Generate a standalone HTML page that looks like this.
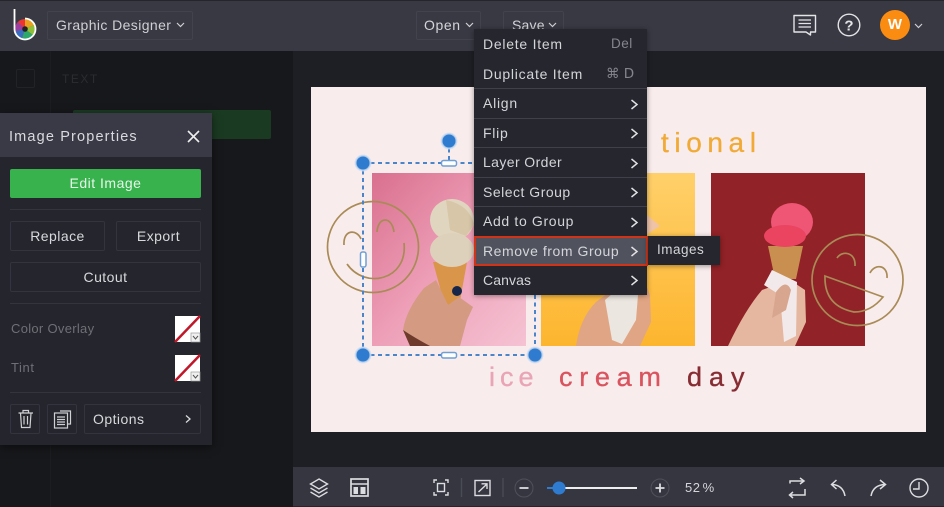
<!DOCTYPE html>
<html><head><meta charset="utf-8"><style>
*{box-sizing:border-box}
html,body{margin:0;padding:0;width:944px;height:507px;overflow:hidden;background:#17181b;font-family:"Liberation Sans",sans-serif}
.a{position:absolute}
.t{position:absolute;white-space:nowrap;letter-spacing:.75px;font-size:14px;line-height:20px;color:#d4d5d9}
.btn{position:absolute;border:1px solid #33343d;border-radius:2px;color:#d8d9dc;font-size:14px;letter-spacing:.45px;text-align:center;line-height:28px;height:30px}
.hr{position:absolute;left:10px;width:191px;height:1px;background:#33343c}
.sep{position:absolute;left:0;width:173px;height:1px;background:#3f4049}
svg{position:absolute;overflow:visible}
</style></head><body>
<div class="a" style="left:293px;top:51px;width:651px;height:456px;background:#1d1f24"></div>
<div class="a" style="left:50px;top:51px;width:1px;height:456px;background:#1c1d20"></div>
<div class="a" style="left:0;top:0;width:944px;height:51px;background:#383943;border-top:1px solid #25262c"></div>
<svg style="left:0;top:0" width="50" height="50">
<circle cx="25" cy="29" r="10" fill="#e33"/>
<path d="M25 29L25 19A10 10 0 0 1 34 25Z" fill="#e8a020"/><path d="M25 29L34 25A10 10 0 0 1 33 35Z" fill="#8fc03a"/><path d="M25 29L33 35A10 10 0 0 1 22 38.500Z" fill="#2ba86a"/><path d="M25 29L22 38.500A10 10 0 0 1 15.500 31Z" fill="#3a6fc0"/><path d="M25 29L15.500 31A10 10 0 0 1 18 22Z" fill="#9a3fa0"/>
<circle cx="25" cy="29" r="2.800" fill="#222"/>
<path d="M14.500 9V29A10.500 10.500 0 1 0 25 18.500" fill="none" stroke="#fff" stroke-width="1.800"/>
</svg>
<div class="a" style="left:47px;top:11px;width:146px;height:29px;border:1px solid #42434d;border-radius:2px"></div>
<div class="t" style="left:56px;top:15px;font-size:14px;letter-spacing:.4px;color:#cfd0d4">Graphic Designer</div>
<svg style="left:176px;top:22px" width="9" height="6"><path d="M1 1L4.500 4.500L8 1" fill="none" stroke="#cfd0d4" stroke-width="1.200"/></svg>
<div class="a" style="left:416px;top:11px;width:65px;height:29px;border:1px solid #42434d;border-radius:2px"></div>
<div class="t" style="left:424px;top:15px;letter-spacing:.6px">Open</div>
<svg style="left:465px;top:22px" width="9" height="6"><path d="M1 1L4.500 4.500L8 1" fill="none" stroke="#cfd0d4" stroke-width="1.200"/></svg>
<div class="a" style="left:503px;top:11px;width:61px;height:29px;border:1px solid #42434d;border-radius:2px"></div>
<div class="t" style="left:512px;top:15px;letter-spacing:.2px">Save</div>
<svg style="left:548px;top:22px" width="9" height="6"><path d="M1 1L4.500 4.500L8 1" fill="none" stroke="#cfd0d4" stroke-width="1.200"/></svg>
<svg style="left:793px;top:14px" width="24" height="22" fill="none" stroke="#e4e4e7" stroke-width="1.400"><path d="M1 1.500H22.500V18H17.500V21L13 18H1Z" stroke-linejoin="round"/><path d="M5.500 6H18M5.500 9.500H18M5.500 13H18" stroke-width="1.300"/></svg>
<svg style="left:837px;top:13px" width="24" height="24"><circle cx="12" cy="12" r="10.800" fill="none" stroke="#e4e4e7" stroke-width="1.400"/><text x="12" y="17.500" text-anchor="middle" font-family="Liberation Sans" font-size="15" font-weight="700" fill="#e4e4e7">?</text></svg>
<div class="a" style="left:880px;top:10px;width:30px;height:30px;border-radius:50%;background:#fb8c12;color:#fff;font-size:15px;font-weight:700;text-align:center;line-height:30px">W</div>
<svg style="left:914px;top:23px" width="9" height="6"><path d="M1 1L4.500 4.500L8 1" fill="none" stroke="#cfd0d4" stroke-width="1.200"/></svg>
<!-- dim left -->
<div class="a" style="left:16px;top:69px;width:19px;height:19px;border:1px solid #222327;border-radius:2px"></div>
<div class="t" style="left:62px;top:69px;font-size:12px;letter-spacing:1.500px;color:#2b2c30">TEXT</div>
<div class="a" style="left:73px;top:110px;width:198px;height:29px;background:#1b3a22;border-radius:2px"></div>
<!-- design -->
<div class="a" style="left:311px;top:87px;width:615px;height:345px;background:#f9eced"></div>
<svg style="left:0;top:0" width="944" height="507">
<defs>
<linearGradient id="p" x1="0" y1="0" x2="1" y2="1"><stop offset="0" stop-color="#d9708f"/><stop offset=".5" stop-color="#ee9fb8"/><stop offset="1" stop-color="#f5c3d3"/></linearGradient>
<linearGradient id="y" x1="0" y1="0" x2="0" y2="1"><stop offset="0" stop-color="#ffd06a"/><stop offset="1" stop-color="#fdb52e"/></linearGradient>
</defs>
<rect x="372" y="173" width="154" height="173" fill="url(#p)"/>
<rect x="541" y="173" width="154" height="173" fill="url(#y)"/>
<rect x="711" y="173" width="154" height="173" fill="#912227"/>
<!-- pink cone -->
<path d="M433 262L467 262L458 312Q450 318 446 310Z" fill="#d9964a"/>
<ellipse cx="452" cy="220" rx="22" ry="21" fill="#e0d6c0"/><path d="M446 200Q470 205 474 225L466 236L450 230Z" fill="#d8c6a8"/><ellipse cx="452" cy="250" rx="22" ry="17" fill="#ded1bb"/>
<path d="M403 330Q406 310 424 288L436 280L448 305L459 297L473 307L467 320L460 346H410Z" fill="#d49a82"/>
<path d="M403 330Q415 338 430 346H410Z" fill="#6e3a2c"/>
<ellipse cx="457" cy="291" rx="5" ry="5" fill="#16264a"/>
<!-- yellow hand -->
<path d="M576 346Q580 318 596 302L612 290L640 270L650 295L651 322L640 346Z" fill="#e0a584"/>
<path d="M605 300L640 270L636 320L622 344L612 340Z" fill="#ebe6df"/>
<path d="M647 215L660 226L646 235Z" fill="#eec3a8"/>
<!-- red cone -->
<path d="M768 246L803 246L796 279H775Z" fill="#c98f50"/>
<ellipse cx="792" cy="222" rx="21" ry="19" fill="#ef5575"/><ellipse cx="785" cy="236" rx="21" ry="11" fill="#ea4461"/>
<path d="M728 346Q745 310 762 290L790 280L805 290L806 322L800 335L795 346Z" fill="#e5b7a0"/>
<path d="M764 285L772 270L797 282L796 336L784 342L780 295Z" fill="#f2eaea"/>
<path d="M776 292Q786 278 791 290L786 310L772 318Z" fill="#d8a68e"/>
<!-- faces -->
<g fill="none" stroke="#a98b56" stroke-width="1.700">
<circle cx="373" cy="247" r="45.500"/>
<path d="M344 245C343 229 357 229 361 239M377 232C378 216 392 216 394 232M347 264C365 290 408 280 404 243"/>
<circle cx="857.500" cy="280" r="45.500"/>
<path d="M837 258C842 250 856 252 855 266M870 273C875 263 888 265 887 278M825 276L883 297Q871 312 854 312Q824 306 825 276Z"/>
</g>
<!-- texts -->
<text x="661" y="152" font-family="Liberation Sans" font-size="28" fill="#f0aa35" stroke="#f0aa35" stroke-width=".3" letter-spacing="5.600">tional</text>
<g font-family="Liberation Sans" font-size="27" stroke-width=".35">
<text x="489" y="386" fill="#e9a5b6" stroke="#e9a5b6" letter-spacing="5">ice</text>
<text x="559" y="386" fill="#d9545f" stroke="#d9545f" letter-spacing="6.700">cream</text>
<text x="687" y="386" fill="#862d33" stroke="#862d33" letter-spacing="7">day</text>
</g>
<!-- selection -->
<g stroke="#4a84c9" stroke-width="2" stroke-dasharray="4 3.500" fill="none">
<path d="M363 163H535M363 163V355M363 355H535M535 295V355M449 141V163"/>
</g>
<g fill="#f9eced" stroke="#6f9fd3" stroke-width="1.500">
<rect x="441.500" y="160.500" width="15" height="5.500" rx="2" fill="#fff"/>
<rect x="441.500" y="352.500" width="15" height="5.500" rx="2" fill="#fff"/>
<rect x="360.500" y="252" width="5.500" height="15" rx="2" fill="#fff"/>
</g>
<g fill="#2f7bd0" stroke="#cfdff0" stroke-opacity=".8" stroke-width="2">
<circle cx="449" cy="141" r="7.500"/><circle cx="363" cy="163" r="7.500"/><circle cx="363" cy="355" r="7.500"/><circle cx="535" cy="355" r="7.500"/>
</g>
</svg>
<!-- panel -->
<div class="a" style="left:0;top:113px;width:212px;height:332px;background:#24252d;box-shadow:0 2px 8px rgba(0,0,0,.5)"></div>
<div class="a" style="left:0;top:113px;width:212px;height:44px;background:#393a45"></div>
<div class="t" style="left:9px;top:127px;font-size:14.500px;letter-spacing:1.150px;color:#d9dade;line-height:20px">Image Properties</div>
<svg style="left:187px;top:130px" width="13" height="13"><path d="M1 1L12 12M12 1L1 12" stroke="#eee" stroke-width="1.600"/></svg>
<div class="a" style="left:10px;top:169px;width:191px;height:29px;background:#37b24d;border-radius:2px;color:#e6f6e9;font-size:14px;letter-spacing:.5px;text-align:center;line-height:29px">Edit Image</div>
<div class="hr" style="top:209px"></div>
<div class="btn" style="left:10px;top:221px;width:95px">Replace</div>
<div class="btn" style="left:116px;top:221px;width:85px">Export</div>
<div class="btn" style="left:10px;top:262px;width:191px">Cutout</div>
<div class="hr" style="top:303px"></div>
<div class="t" style="left:11px;top:319px;font-size:13px;letter-spacing:.3px;color:#6f7076">Color Overlay</div>
<div class="t" style="left:11px;top:358px;font-size:13px;letter-spacing:.6px;color:#6f7076">Tint</div>
<svg style="left:175px;top:316px" width="26" height="26"><rect width="25" height="26" fill="#fff"/><path d="M0 26L25 0" stroke="#c0182a" stroke-width="2.500"/><rect x="16" y="17" width="9" height="9" fill="#f0f0f0" stroke="#999" stroke-width=".7"/><path d="M18 20L20.500 23L23 20" fill="none" stroke="#555"/></svg>
<svg style="left:175px;top:355px" width="26" height="26"><rect width="25" height="26" fill="#fff"/><path d="M0 26L25 0" stroke="#c0182a" stroke-width="2.500"/><rect x="16" y="17" width="9" height="9" fill="#f0f0f0" stroke="#999" stroke-width=".7"/><path d="M18 20L20.500 23L23 20" fill="none" stroke="#555"/></svg>
<div class="hr" style="top:392px"></div>
<div class="btn" style="left:10px;top:404px;width:30px"></div>
<div class="btn" style="left:47px;top:404px;width:30px"></div>
<div class="btn" style="left:84px;top:404px;width:117px;text-align:left;padding-left:8px">Options</div>
<svg style="left:184px;top:414px" width="8" height="10"><path d="M2 1.500L6 5L2 8.500" fill="none" stroke="#d8d9dc" stroke-width="1.300"/></svg>
<svg style="left:17px;top:409px" width="18" height="20" fill="none" stroke="#cfd0d4" stroke-width="1.200"><path d="M1.500 4H16M6 4V1.500H11.500V4M3.500 4L4.500 18.500H13L14 4M7 7V15.500M10.500 7V15.500"/></svg>
<svg style="left:53px;top:409px" width="20" height="20" fill="none" stroke="#cfd0d4" stroke-width="1.200"><path d="M7 2H17.500V15H15"/><rect x="1.500" y="4" width="13" height="15" fill="#24252d"/><path d="M4 8H12M4 10.500H12M4 13H12M4 15.500H12" stroke-width="1.300"/></svg>
<!-- bottom bar -->
<div class="a" style="left:293px;top:467px;width:651px;height:40px;background:#353640;border-bottom:1px solid #24252b"></div>
<svg style="left:0;top:0" width="944" height="507" fill="none" stroke="#dcdde0" stroke-width="1.400">
<path d="M319 479L327.500 484L319 489L310.500 484Z"/><path d="M310.500 488L319 493L327.500 488M310.500 492L319 497L327.500 492"/>
<rect x="351" y="479" width="17" height="17" stroke-width="1.700"/><path d="M351 484H368"/><rect x="353.500" y="487" width="4.500" height="7" fill="#dcdde0" stroke="none"/><rect x="360.500" y="487" width="5" height="7" fill="#dcdde0" stroke="none"/>
<path d="M434 483V480H437M445 480H448V483M448 492V495H445M437 495H434V492"/><rect x="437.500" y="483.500" width="7" height="8"/>
<path d="M461.500 478V497" stroke="#4a4b55"/>
<rect x="475" y="480.500" width="15" height="15"/><path d="M478.500 492L487 484M481.500 483.800H487V489"/>
<path d="M503 478V497" stroke="#4a4b55"/>
<circle cx="524" cy="488" r="9" stroke="#4f505a" stroke-width="1"/><path d="M519.500 488H528.500" stroke-width="1.800"/>
<path d="M547 488H637" stroke-width="2" stroke="#eee"/><path d="M547 488H558" stroke-width="2" stroke="#2f7bd0"/>
<circle cx="660" cy="488" r="9" stroke="#4f505a" stroke-width="1"/><path d="M655.500 488H664.500M660 483.500V492.500" stroke-width="1.800"/>
<path d="M790 483.500V481H803M800 478L804 481L800 484M805 489V495H790M793 492L789.500 495L793 498" stroke-width="1.500"/>
<path d="M845 496Q843 485 832 484.500M836.500 480L831.500 484.500L836.500 489" stroke-width="1.500"/>
<path d="M871 496Q873 485 885 484.500M880 480L885.500 484.500L880 489" stroke-width="1.500"/>
<circle cx="919" cy="488" r="9"/><path d="M919 482V489H913"/>
</svg>
<svg style="left:551px;top:480px" width="16" height="16"><circle cx="8" cy="8" r="6.500" fill="#2f7bd0"/></svg>
<div class="t" style="left:685px;top:478px;font-size:13px;letter-spacing:.5px;word-spacing:-2px;color:#d4d5d9">52 %</div>
<!-- menu -->
<div class="a" style="left:474px;top:29px;width:173px;height:266px;background:#25262e;box-shadow:0 1px 5px rgba(0,0,0,.4)"></div>
<div class="sep" style="left:474px;top:88px"></div><div class="sep" style="left:474px;top:118px"></div><div class="sep" style="left:474px;top:147px"></div><div class="sep" style="left:474px;top:177px"></div><div class="sep" style="left:474px;top:206px"></div>
<div class="a" style="left:474px;top:236px;width:174px;height:30px;background:#50525e;border:2px solid #cf3418"></div>
<div class="t" style="left:483px;top:34px">Delete Item</div>
<div class="t" style="left:611px;top:34px;color:#85868d;letter-spacing:.5px;font-size:13.500px">Del</div>
<div class="t" style="left:483px;top:64px">Duplicate Item</div>
<div class="t" style="left:606px;top:64px;color:#85868d;font-size:13.500px;font-family:'DejaVu Sans',sans-serif;letter-spacing:0">⌘ D</div>
<div class="t" style="left:483px;top:93px">Align</div>
<div class="t" style="left:483px;top:123px">Flip</div>
<div class="t" style="left:483px;top:152px;letter-spacing:.4px">Layer Order</div>
<div class="t" style="left:483px;top:182px;letter-spacing:.5px">Select Group</div>
<div class="t" style="left:483px;top:211px;letter-spacing:.65px">Add to Group</div>
<div class="t" style="left:483px;top:241px;letter-spacing:.55px">Remove from Group</div>
<div class="t" style="left:483px;top:270px;letter-spacing:.1px">Canvas</div>
<svg style="left:630px;top:99px" width="9" height="190" fill="none" stroke="#e2e2e6" stroke-width="1.500"><path d="M1.500 1L7 5.500L1.500 10M1.500 30L7 34.500L1.500 39M1.500 60L7 64.500L1.500 69M1.500 89L7 93.500L1.500 98M1.500 119L7 123.500L1.500 128M1.500 148L7 152.500L1.500 157M1.500 177L7 181.500L1.500 186"/></svg>
<div class="a" style="left:648px;top:236px;width:72px;height:29px;background:#25262e;box-shadow:0 1px 5px rgba(0,0,0,.4)"></div>
<div class="t" style="left:657px;top:240px;font-size:13.500px;letter-spacing:.5px">Images</div>
</body></html>
